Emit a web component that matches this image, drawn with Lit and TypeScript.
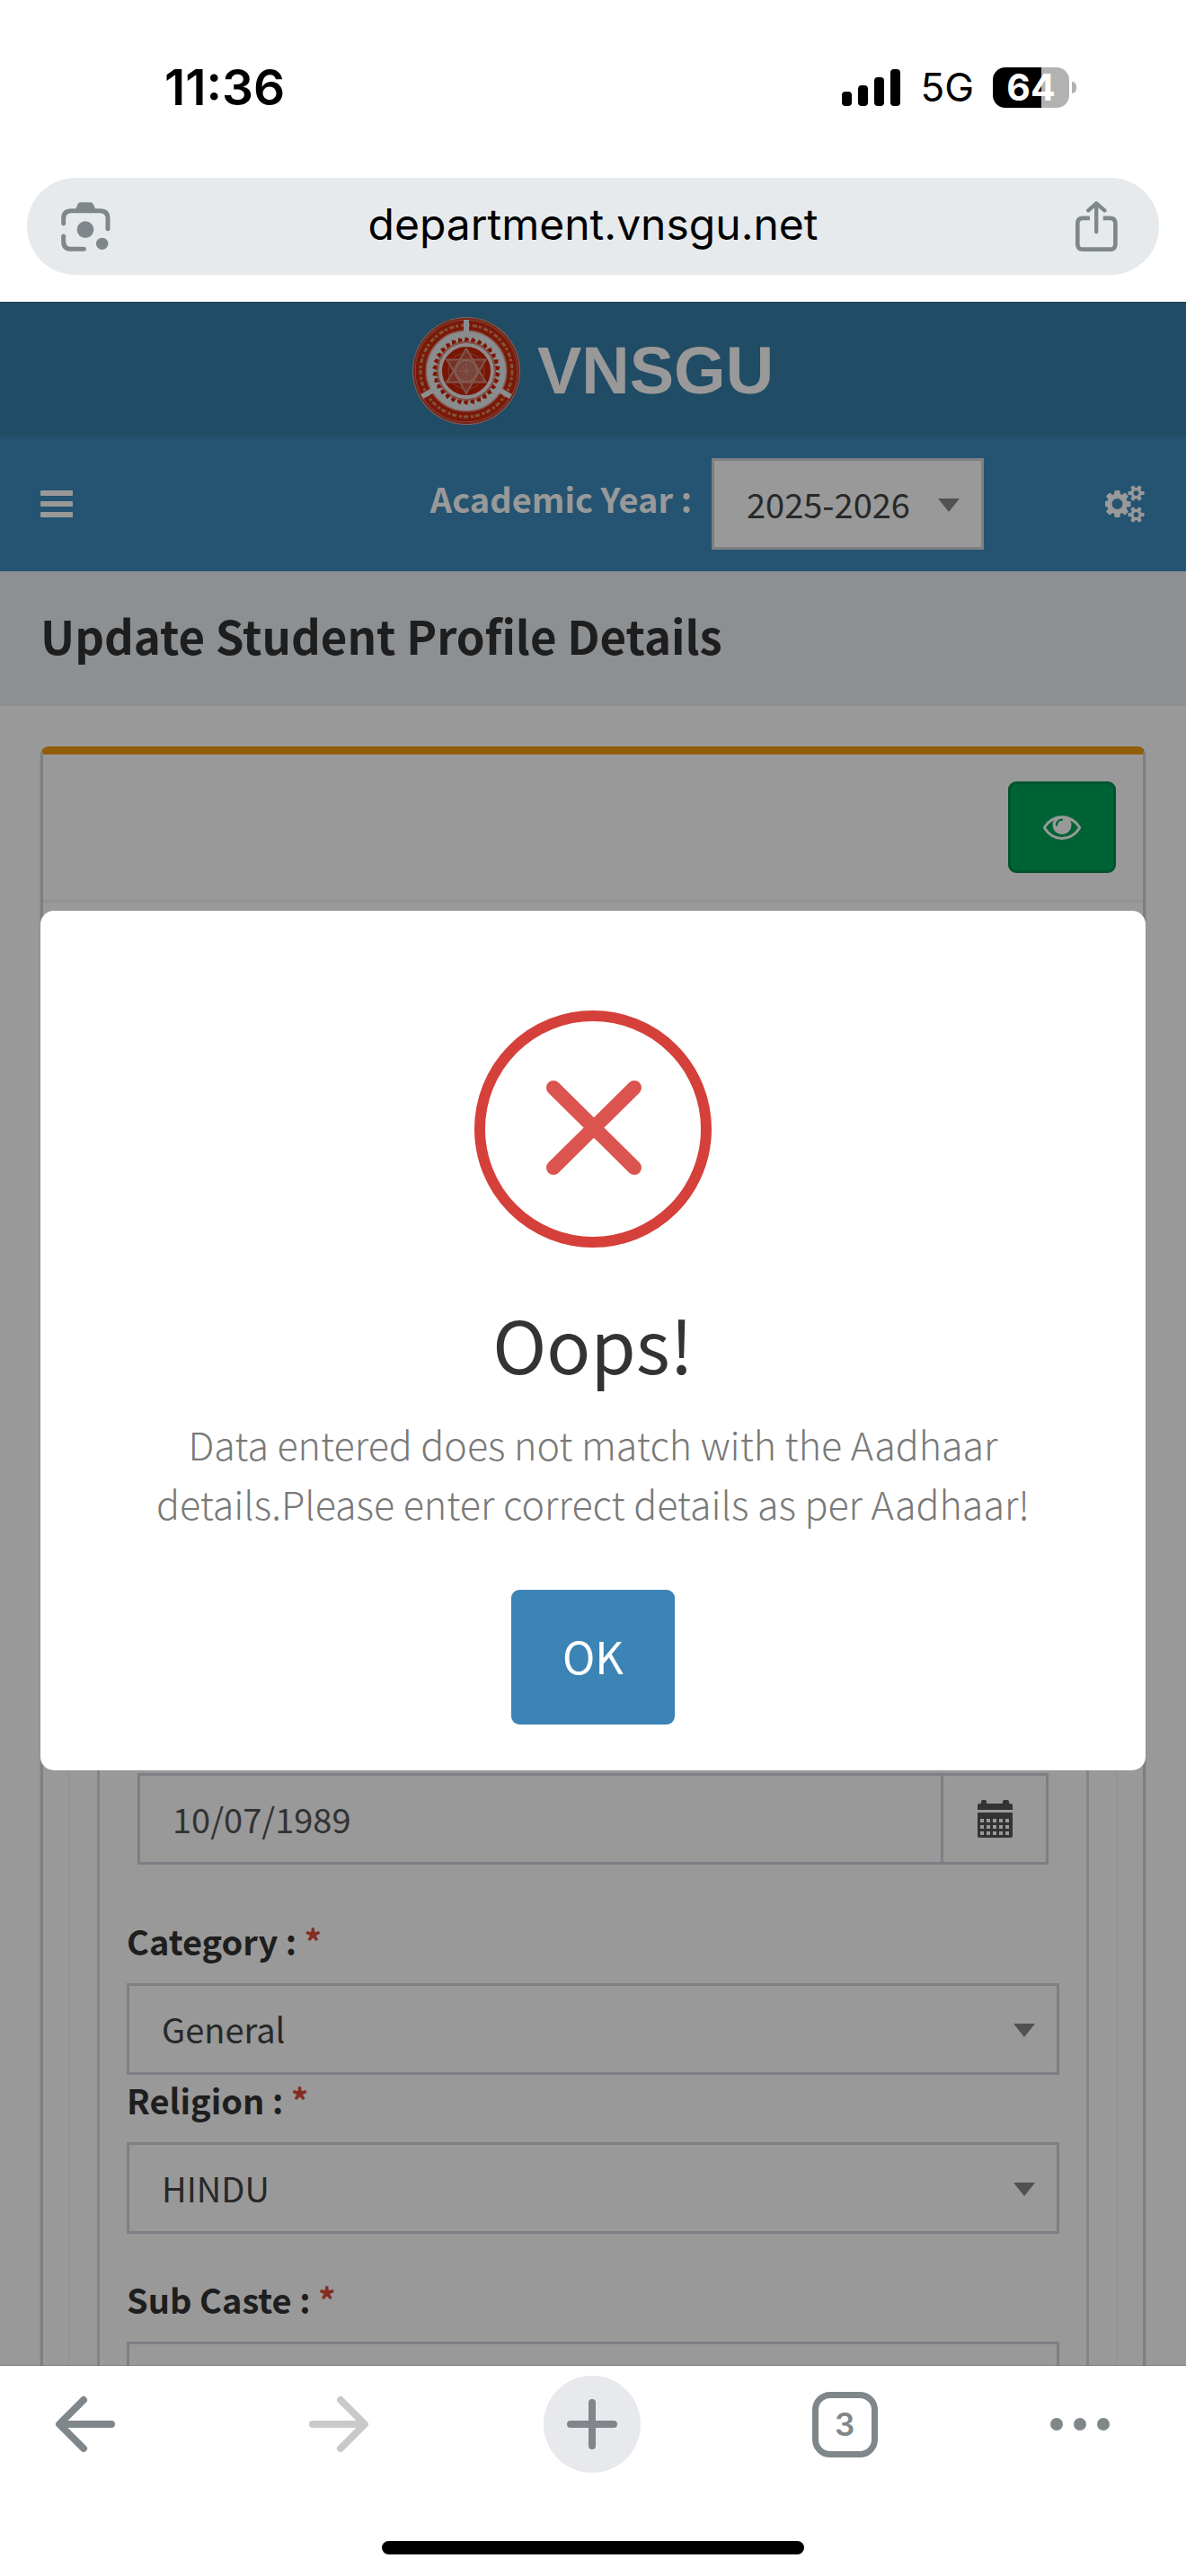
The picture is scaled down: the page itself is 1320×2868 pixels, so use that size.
import { LitElement, html, svg, css } from "lit";
import { customElement, state } from "lit/decorators.js";

const EYE =
  "M1664 960q-152-236-381-353 61 104 61 225 0 185-131.5 316.5t-316.5 131.5-316.5-131.5-131.5-316.5q0-121 61-225-229 117-381 353 133 205 333.5 326.5t434.5 121.5 434.5-121.5 333.5-326.5zm-720-384q0-20-14-34t-34-14q-125 0-214.5 89.5t-89.5 214.5q0 20 14 34t34 14 34-14 14-34q0-86 61-147t147-61q20 0 34-14t14-34zm848 384q0 34-20 69-140 230-376.5 368.5t-499.5 138.5-499.5-139-376.5-368q-20-35-20-69t20-69q140-229 376.5-368t499.5-139 499.5 139 376.5 368q20 35 20 69z";

const SMALL_COG =
  "v140q0 16-149 31-12 27-30 52 51 113 51 138 0 4-4 7-122 71-124 71-8 0-46-47t-52-68q-20 2-30 2t-30-2q-14 21-52 68t-46 47q-2 0-124-71-4-3-4-7 0-25 51-138-18-25-30-52-149-15-149-31v-140q0-16 149-31 13-29 30-52-51-113-51-138 0-4 4-7 4-2 35-20t59-34 30-16q8 0 46 46.5t52 67.5q20-2 30-2t30 2q51-71 92-112l6-2q4 0 124 70 4 3 4 7 0 25-51 138 17 23 30 52 149 15 149 31z";

const COGS =
  "M832 960q0-106-75-181t-181-75-181 75-75 181 75 181 181 75 181-75 75-181zm768 512q0-52-38-90t-90-38-90 38-38 90q0 53 37.5 90.5t90.5 37.5 90.5-37.5 37.5-90.5zm0-1024q0-52-38-90t-90-38-90 38-38 90q0 53 37.5 90.5t90.5 37.5 90.5-37.5 37.5-90.5zm-384 421v185q0 10-7 19.5t-16 10.5l-155 24q-11 35-32 76 34 48 90 115 7 11 7 20 0 12-7 19-23 30-82.5 89.5t-78.5 59.5q-11 0-21-7l-115-90q-37 19-77 31-11 108-23 155-7 24-30 24h-186q-11 0-20-7.5t-10-17.5l-23-153q-34-10-75-31l-118 89q-7 7-20 7-11 0-21-8-144-133-144-160 0-9 7-19 10-14 41-53t47-61q-23-44-35-82l-152-24q-10-1-17-9.5t-7-19.5v-185q0-10 7-19.5t16-10.5l155-24q11-35 32-76-34-48-90-115-7-11-7-20 0-12 7-20 22-30 82-89t79-59q11 0 21 7l115 90q34-18 77-32 11-108 23-154 7-24 30-24h186q11 0 20 7.5t10 17.5l23 153q34 10 75 31l118-89q8-7 20-7 11 0 21 8 144 133 144 160 0 8-7 19-12 16-42 54t-45 60q23 48 34 82l152 23q10 2 17 10.5t7 19.5zm640 533" +
  SMALL_COG +
  "m0-1024" +
  SMALL_COG;

const reset = css`
  *, *::before, *::after { box-sizing: border-box; }
  button, input, select {
    appearance: none;
    margin: 0;
    padding: 0;
    border: 0;
    border-radius: 0;
    background: none;
    color: inherit;
    font: inherit;
  }
  svg { display: block; flex: none; }
`;

/** Phone status line and the address bar. */
@customElement("browser-top")
export class BrowserTop extends LitElement {
  static styles = [
    reset,
    css`
      :host { display: block; flex: none; background: #fff; color: #000; font-family: Inter, "Liberation Sans", sans-serif; }
      .status { display: flex; align-items: center; padding: 58px 130px 62px 183px; }
      .time { margin-right: auto; font-size: 55px; line-height: 78px; font-weight: 600; }
      .network { margin: 0 21px 0 22px; font-size: 44px; line-height: 78px; }
      .battery { position: relative; width: 85px; height: 45px; border-radius: 14px; display: grid; place-items: center;
        background: linear-gradient(to right, #000 64%, #b2b2b2 64%); color: #fff; font-size: 41px; line-height: 45px; font-weight: 700; }
      .battery::after { content: ""; position: absolute; left: 88px; top: 16px; width: 5px; height: 13px; border-radius: 0 7px 7px 0; background: #b2b2b2; }
      .address { display: grid; grid-template-columns: 1fr auto 1fr; align-items: center; height: 108px; margin: 0 30px 30px; padding: 0 38px;
        border-radius: 54px; background: #e6eaed; }
      .url { padding-bottom: 4px; font-size: 48px; line-height: 72px; text-align: center; }
      .icon { display: block; color: #7f878a; }
      .end { justify-self: end; }
    `,
  ];
  render() {
    return html`
      <div class="status">
        <span class="time">11:36</span>
        <svg width="65" height="41" viewBox="0 0 65 41" aria-hidden="true">
          <rect x="0" y="25" width="11" height="16" rx="4"></rect>
          <rect x="18" y="18" width="11" height="23" rx="4"></rect>
          <rect x="36" y="9" width="11" height="32" rx="4"></rect>
          <rect x="54" y="0" width="11" height="41" rx="4"></rect>
        </svg>
        <span class="network">5G</span>
        <span class="battery">64</span>
      </div>
      <div class="address">
        <button class="icon" aria-label="Lens">
          <svg width="55" height="55" viewBox="54 42 165 165" fill="none" stroke="currentColor" stroke-width="15" stroke-linecap="round">
            <path d="M62 113V97Q62 71 88 71H184Q210 71 210 97V131M62 156V173Q62 199 88 199H130"></path>
            <path d="M100 72L109 50Q112 43 119 43H152Q159 43 162 50L172 72Z" fill="currentColor" stroke="none"></path>
            <circle cx="135" cy="134" r="28" fill="currentColor" stroke="none"></circle>
            <circle cx="191" cy="181" r="20" fill="currentColor" stroke="none"></circle>
          </svg>
        </button>
        <span class="url">department.vnsgu.net</span>
        <button class="icon end" aria-label="Share">
          <svg width="56" height="58" viewBox="46 40 169 175" fill="none" stroke="currentColor" stroke-width="14">
            <path d="M97 100H74Q56 100 56 118V187Q56 205 74 205H165Q183 205 183 187V118Q183 100 165 100H142"></path>
            <path d="M119 146V52M92 74L119 50L147 74" stroke-width="13" stroke-linecap="round" stroke-linejoin="round"></path>
          </svg>
        </button>
      </div>
    `;
  }
}

/** Browser toolbar with the home indicator. */
@customElement("browser-bottom")
export class BrowserBottom extends LitElement {
  static styles = [
    reset,
    css`
      :host { display: block; flex: none; background: #fff; font-family: Inter, "Liberation Sans", sans-serif; color: #7f878a; }
      .bar { display: flex; justify-content: space-between; align-items: center; padding: 11px 84px 76px 41px; }
      .tool { width: 108px; height: 108px; display: grid; place-items: center; }
      .off { color: #c9c9c9; }
      .add { border-radius: 54px; background: #e8e9ed; color: #80868b; }
      .more { width: 68px; }
      .tabs { display: grid; place-items: center; width: 73px; height: 73px; border: 7px solid; border-radius: 20px; font-size: 35px; line-height: 56px; font-weight: 600; }
      .home { width: 470px; height: 15px; margin: 0 auto; border-radius: 8px; background: #000; }
      .foot { padding-bottom: 24px; }
    `,
  ];
  render() {
    const arrow = svg`<path d="M63 33H6M32 6L5 33L32 60"></path>`;
    return html`
      <nav class="bar" aria-label="Browser">
        <button class="tool" aria-label="Back">
          <svg width="68" height="66" viewBox="0 0 68 66" fill="none" stroke="currentColor" stroke-width="8" stroke-linecap="round" stroke-linejoin="round">${arrow}</svg>
        </button>
        <button class="tool off" aria-label="Forward">
          <svg width="68" height="66" viewBox="0 0 68 66" fill="none" stroke="currentColor" stroke-width="8" stroke-linecap="round" stroke-linejoin="round"><g transform="matrix(-1 0 0 1 68 0)">${arrow}</g></svg>
        </button>
        <button class="tool add" aria-label="New tab">
          <svg width="56" height="56" viewBox="0 0 56 56" fill="none" stroke="currentColor" stroke-width="8" stroke-linecap="round"><path d="M28 4V52M4 28H52"></path></svg>
        </button>
        <button class="tool" aria-label="Tabs"><span class="tabs">3</span></button>
        <button class="tool more" aria-label="More">
          <svg width="68" height="16" viewBox="0 0 68 16" fill="currentColor"><circle cx="8" cy="8" r="7"></circle><circle cx="34" cy="8" r="7"></circle><circle cx="60" cy="8" r="7"></circle></svg>
        </button>
      </nav>
      <div class="foot"><div class="home"></div></div>
    `;
  }
}

/** Round university seal. */
@customElement("uni-seal")
export class UniSeal extends LitElement {
  static styles = css`:host { display: block; } svg { display: block; }`;
  render() {
    const teeth = Array.from({ length: 30 }, (_, i) => i * 12);
    return html`
      <svg width="120" height="120" viewBox="-60 -60 120 120" aria-hidden="true">
        <circle r="60" fill="#dfa296"></circle>
        <circle r="58" fill="none" stroke="#c4402c" stroke-width="2"></circle>
        <circle r="51" fill="none" stroke="#cc2a10" stroke-width="11"></circle>
        <circle r="51" fill="none" stroke="#d8905f" stroke-width="3" stroke-dasharray="5 2 3 3"></circle>
        <circle r="44" fill="#e6eced"></circle>
        ${[0, 120, 240].map((a) => svg`<rect x="-3" y="-57" width="6" height="16" fill="#e6eced" transform="rotate(${a})"></rect>`)}
        ${teeth.map((a) => svg`<path d="M-3 -31L-1 -38L3 -36L2 -31Z" fill="#cf2408" transform="rotate(${a})"></path>`)}
        <circle r="32" fill="none" stroke="#d98a7c" stroke-width="2"></circle>
        <circle r="28" fill="#c82408" stroke="#f0e6e2" stroke-width="2"></circle>
        <path d="M0 -25L21.6 12.5H-21.6ZM0 25L21.6 -12.5H-21.6Z" fill="#c8503a" stroke="#d89080" stroke-width="2"></path>
        <circle r="20" fill="none" stroke="#d07060" stroke-width="1"></circle>
        <circle r="12" fill="#c87060" stroke="#d89a8c" stroke-width="2"></circle>
        <path d="M-9 0H9M0 -9V9M-6 -6L6 6M6 -6L-6 6" stroke="#d89080" stroke-width="1"></path>
      </svg>
    `;
  }
}

@customElement("app-root")
export class AppRoot extends LitElement {
  @state() private open = true;

  static styles = [
    reset,
    css`
      :host { display: flex; flex-direction: column; height: 100vh; overflow: hidden; color: #333;
        font-family: "Noto Sans CJK JP", "Noto Sans", sans-serif; }
      .view { position: relative; flex: 1; min-height: 0; overflow: hidden; background: #fff; }
      .brand { display: flex; justify-content: center; align-items: center; gap: 19px; height: 150px; padding-top: 4px; background: #367fa9; color: #fff;
        font-family: "Liberation Sans", Arial, sans-serif; font-size: 74px; line-height: 84px; font-weight: 700; text-decoration: none; }
      .nav { display: flex; align-items: center; height: 150px; padding: 0 45px; background: #3c8dbc; color: #fff; }
      .icon-button { display: block; }
      .year { margin-left: auto; padding-bottom: 13px; font-size: 38px; line-height: 56px; font-weight: 700; }
      .year-select { width: 303px; margin: 0 135px 0 22px; }
      .title { margin: 0; padding: 35px 45px 43px; background: #ecf0f5; font-size: 51px; line-height: 72px; font-weight: 700; }
      .panel { margin: 45px 45px 0; border: 3px solid #d2d2dc; border-top: 9px solid #f39c12; border-radius: 9px; box-shadow: 0 3px 3px rgba(0, 0, 0, 0.1); }
      .panel-head { display: flex; justify-content: flex-end; padding: 30px; border-bottom: 3px solid #f4f4f4; }
      .view-button { display: grid; place-items: center; width: 120px; height: 102px; border: 3px solid #008d4c; border-radius: 9px; background: #00a65a; color: #fff; }
      .panel-body { padding: 30px; }
      .card { padding: 30px; box-shadow: 0 3px 3px rgba(0, 0, 0, 0.1); }
      .form { padding: 906px 30px 90px; border: 3px solid #ddd; }
      .date { display: flex; height: 102px; margin: 0 12px 57px; border: 3px solid #d2d2dc; }
      .date-input { flex: 1; min-width: 0; padding: 0 36px; color: #555; font-size: 38px; line-height: 56px; }
      .date-button { display: grid; place-items: center; width: 117px; border-left: 3px solid #d2d2dc; color: #555; }
      .label { display: block; margin-bottom: 19px; font-size: 38px; line-height: 56px; font-weight: 700; }
      .required { color: #dd4b39; }
      .drop { display: grid; align-items: center; }
      .select { grid-area: 1 / 1; width: 100%; height: 102px; padding: 0 60px 0 36px; border: 3px solid #d2d2dc; background: #fff; color: #444;
        font-size: 38px; line-height: 56px; }
      .arrow { grid-area: 1 / 1; justify-self: end; margin: 3px 27px 0 0; pointer-events: none; }
      .spaced { margin-bottom: 45px; }
      .text-input { display: block; width: 100%; height: 102px; border: 3px solid #d2d2dc; }
      .overlay { position: absolute; inset: 0; display: flex; align-items: center; padding: 15px 45px 0; background: rgba(0, 0, 0, 0.4);
        border: solid rgba(0, 0, 0, 0.2); border-width: 1px 0; }
      .modal { display: flex; flex-direction: column; align-items: center; flex: 1; padding: 111px 90px 51px; border-radius: 15px; background: #fff; text-align: center; }
      .modal-title { margin: 46px 0 19px; color: #333; font-size: 81px; line-height: 120px; font-weight: 400; }
      .modal-text { margin: 0 0 64px; color: #797979; font-size: 43px; line-height: 66px; font-weight: 300; }
      .ok { height: 150px; padding: 0 57px 5px; border-radius: 9px; background: #3c84b5; color: #fff; font-size: 49px; line-height: 72px; }
    `,
  ];

  private label(text: string, id: string) {
    return html`<label class="label" for=${id}>${text} <span class="required">*</span></label>`;
  }

  private drop(id: string, value: string, extra = "") {
    return html`
      <div class="drop ${extra}">
        <select class="select" id=${id}><option>${value}</option></select>
        <svg class="arrow" width="24" height="15" viewBox="0 0 24 15" fill="#888" aria-hidden="true"><path d="M0 0H24L12 15Z"></path></svg>
      </div>
    `;
  }

  render() {
    const cells = [0, 1, 2].flatMap((r) => [0, 1, 2, 3, 4].map((c) => `M${3 + c * 7} ${21 + r * 7}v4h4v-4z`)).join("");
    return html`
      <browser-top></browser-top>
      <main class="view">
        <a class="brand" href="#"><uni-seal></uni-seal><span>VNSGU</span></a>
        <div class="nav">
          <button class="icon-button" aria-label="Menu">
            <svg width="36" height="30" viewBox="0 0 36 30" fill="currentColor"><rect width="36" height="6" rx="1"></rect><rect y="12" width="36" height="6" rx="1"></rect><rect y="24" width="36" height="6" rx="1"></rect></svg>
          </button>
          <label class="year" for="year">Academic Year :</label>
          ${this.drop("year", "2025-2026", "year-select")}
          <button class="icon-button" aria-label="Settings">
            <svg width="45" height="42" viewBox="0 64 1920 1792" fill="currentColor"><path d=${COGS}></path></svg>
          </button>
        </div>
        <h1 class="title">Update Student Profile Details</h1>
        <section class="panel">
          <div class="panel-head">
            <button class="view-button" aria-label="View">
              <svg width="42" height="27" viewBox="0 384 1792 1152" fill="currentColor"><path d=${EYE}></path></svg>
            </button>
          </div>
          <div class="panel-body">
            <div class="card">
              <form class="form">
                <div class="date">
                  <input class="date-input" type="text" aria-label="Date" .value=${"10/07/1989"} />
                  <button class="date-button" type="button" aria-label="Calendar">
                    <svg width="39" height="42" viewBox="0 0 39 42" fill="currentColor">
                      <path d="M4 4V2Q4 0 6 0H8Q10 0 10 2V4H28V2Q28 0 30 0H33Q35 0 35 2V4H37Q39 4 39 6V11H0V6Q0 4 2 4Z"></path>
                      <path fill-rule="evenodd" d="M0 14H39V40Q39 42 37 42H2Q0 42 0 40Z${cells}"></path>
                    </svg>
                  </button>
                </div>
                ${this.label("Category :", "category")}
                ${this.drop("category", "General")}
                ${this.label("Religion :", "religion")}
                ${this.drop("religion", "HINDU", "spaced")}
                ${this.label("Sub Caste :", "caste")}
                <input class="text-input" id="caste" type="text" />
              </form>
            </div>
          </div>
        </section>
        ${this.open
          ? html`<div class="overlay">
              <div class="modal" role="alertdialog" aria-labelledby="alert-title" aria-describedby="alert-text">
                <svg width="264" height="264" viewBox="0 0 264 264" fill="none" aria-hidden="true">
                  <circle cx="132" cy="132" r="126" stroke="#d5403a" stroke-width="12"></circle>
                  <path d="M88 86L178 175M178 86L88 175" stroke="#db544f" stroke-width="16" stroke-linecap="round"></path>
                </svg>
                <h2 class="modal-title" id="alert-title">Oops!</h2>
                <p class="modal-text" id="alert-text">Data entered does not match with the Aadhaar details.Please enter correct details as per Aadhaar!</p>
                <button class="ok" @click=${() => (this.open = false)}>OK</button>
              </div>
            </div>`
          : null}
      </main>
      <browser-bottom></browser-bottom>
    `;
  }
}
